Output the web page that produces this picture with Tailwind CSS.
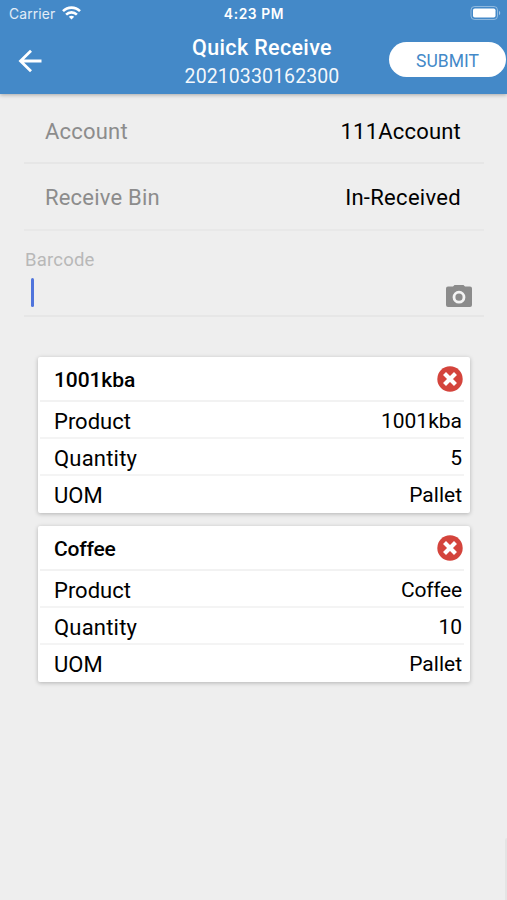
<!DOCTYPE html>
<html lang="en">
<head>
<meta charset="utf-8">
<title>Quick Receive</title>
<script src="https://cdn.jsdelivr.net/npm/@tailwindcss/browser@4"></script>
</head>
<body class="bg-[#eeeeee]">
<div class="relative flex h-[900px] w-[507px] flex-col overflow-hidden bg-[#eeeeee] font-['Roboto',sans-serif] text-black">
  <header class="relative z-10 h-[94px] shrink-0 bg-[#4489c8] text-white shadow-[0_1px_4px_rgba(0,0,0,0.3)]">
    <div class="grid h-7 grid-cols-3 items-center pl-[9px] pr-[6px] font-['Inter',sans-serif]">
      <div class="flex items-center gap-[7px]">
        <span class="text-[13.8px] tracking-[0.15px] text-white/85">Carrier</span>
        <svg class="h-[14px] w-[19px] -translate-y-px" viewBox="0 0 19 14" fill="none" stroke="white" stroke-width="2.6"><path d="M1 5.2C5.8.4 13.2.4 18 5.2"/><path d="M4.1 8.6c3.1-3 7.7-3 10.8 0"/><path d="M6.8 10.7c1.6-1.4 3.8-1.4 5.4 0L9.5 13.6z" fill="white" stroke="none"/></svg>
      </div>
      <span class="whitespace-nowrap pr-[2px] text-center text-[13.8px] font-semibold tracking-[0.6px]">4:23 PM</span>
      <svg class="h-[14px] w-[31px] -translate-y-px justify-self-end" viewBox="0 0 31 14"><rect x="1" y=".5" width="26.5" height="13" rx="3.5" fill="none" stroke="white" stroke-opacity=".4"/><rect x="3" y="2.5" width="22.500" height="9" rx="1.800" fill="white"/><path d="M29 4.800c1.700.8 1.700 3.600 0 4.400z" fill="white" fill-opacity=".5"/></svg>
    </div>
    <div class="grid grid-cols-[150px_1fr_150px] pt-[6px]">
      <svg class="ml-[18px] mt-[14.500px] h-6 w-6" viewBox="0 0 24 24" fill="none" stroke="white" stroke-width="2.800"><path d="M23.500 12H3M13 1.700 2.500 12 13 22.300"/></svg>
      <div class="pl-[17px] text-center">
        <h1 class="whitespace-nowrap text-[21.500px] font-medium leading-[28px] tracking-[0.35px]">Quick Receive</h1>
        <p class="pt-[2px] text-[19.500px] leading-[26px] tracking-[0.1px] text-white/95">20210330162300</p>
      </div>
      <button class="mr-[1px] mt-[8px] h-[35px] w-[117px] justify-self-end rounded-full bg-white pt-[4px] text-[17.500px] text-[#4489c8]">SUBMIT</button>
    </div>
  </header>
  <main class="flex flex-col">
    <section class="ml-6 mr-[23px]">
      <div class="flex h-[70px] items-center justify-between border-b-2 border-[#e6e6e6] pl-[21px] pr-[23px] pt-[6px] text-[22px]"><span class="tracking-[0.2px] text-[#8c8c8c]">Account</span><span class="tracking-[0.2px]">111Account</span></div>
      <div class="flex h-[67px] items-center justify-between border-b-2 border-[#e8e8e8] pl-[21px] pr-[23px] pt-[2px] text-[22px]"><span class="tracking-[0.2px] text-[#8c8c8c]">Receive Bin</span><span class="tracking-[0.3px]">In-Received</span></div>
      <div class="flex h-[86px] justify-between border-b-2 border-[#e6e6e6] pl-[1px] pr-[12px]">
        <div class="pt-[16px]">
          <label class="block text-[18.500px] leading-[26px] tracking-[0.2px] text-[#b8b8b8]">Barcode</label>
          <div class="ml-[6px] mt-[5px] h-[29px] w-[3px] rounded-full bg-[#4f74dc]"></div>
        </div>
        <svg class="mt-[54px] h-[22px] w-[26px]" viewBox="0 0 26 22"><path fill="#8b8b8b" d="M2 1.500H7L8.500 0h9L19 1.500h5a2 2 0 0 1 2 2V20a2 2 0 0 1-2 2H2a2 2 0 0 1-2-2V3.500a2 2 0 0 1 2-2z"/><circle cx="13" cy="12.200" r="5" fill="#8b8b8b" stroke="#f3f3f3" stroke-width="2.800"/></svg>
      </div>
    </section>
    <section class="ml-[38px] mt-[40px] flex w-[432px] flex-col gap-[13px] text-[21px]">
      <article class="h-[156px] rounded-[2px] bg-white pl-[2px] pr-[6px] shadow-[0_1px_4px_rgba(0,0,0,0.25)]">
        <div class="flex h-[45px] items-center justify-between border-b-2 border-[#f2f2f2] pl-[14px] pr-[1px] pt-[2px]"><h2 class="pt-[2px] font-medium tracking-[-0.1px]">1001kba</h2><svg class="h-[26px] w-[26px] -translate-y-px" viewBox="0 0 26 26"><circle cx="13" cy="13" r="12.700" fill="#d4443c"/><path d="m9 9 8 8m0-8-8 8" stroke="white" stroke-width="4.200" stroke-linecap="square" stroke-linejoin="round"/></svg></div>
        <div class="flex h-[37px] items-center justify-between border-b-2 border-[#f4f4f4] pl-[14px] pr-[2px] pt-[4px]"><span class="text-[22px]">Product</span><span>1001kba</span></div>
        <div class="flex h-[37px] items-center justify-between border-b-2 border-[#f4f4f4] pl-[14px] pr-[2px] pt-[4px]"><span class="text-[22px] tracking-[0.2px]">Quantity</span><span>5</span></div>
        <div class="flex h-[37px] items-center justify-between pl-[14px] pr-[2px] pt-[2px]"><span class="text-[22px]">UOM</span><span>Pallet</span></div>
      </article>
      <article class="h-[156px] rounded-[2px] bg-white pl-[2px] pr-[6px] shadow-[0_1px_4px_rgba(0,0,0,0.25)]">
        <div class="flex h-[45px] items-center justify-between border-b-2 border-[#f2f2f2] pl-[14px] pr-[1px] pt-[2px]"><h2 class="pt-[2px] font-medium tracking-[-0.2px]">Coffee</h2><svg class="h-[26px] w-[26px] -translate-y-px" viewBox="0 0 26 26"><circle cx="13" cy="13" r="12.700" fill="#d4443c"/><path d="m9 9 8 8m0-8-8 8" stroke="white" stroke-width="4.200" stroke-linecap="square" stroke-linejoin="round"/></svg></div>
        <div class="flex h-[37px] items-center justify-between border-b-2 border-[#f4f4f4] pl-[14px] pr-[2px] pt-[4px]"><span class="text-[22px]">Product</span><span class="tracking-[-0.2px]">Coffee</span></div>
        <div class="flex h-[37px] items-center justify-between border-b-2 border-[#f4f4f4] pl-[14px] pr-[2px] pt-[4px]"><span class="text-[22px] tracking-[0.2px]">Quantity</span><span>10</span></div>
        <div class="flex h-[37px] items-center justify-between pl-[14px] pr-[2px] pt-[2px]"><span class="text-[22px]">UOM</span><span>Pallet</span></div>
      </article>
    </section>
  </main>
  <div class="absolute bottom-0 right-0 h-[62px] w-[2px] rounded-tl bg-[#e4e4e4]"></div>
</div>
</body>
</html>
